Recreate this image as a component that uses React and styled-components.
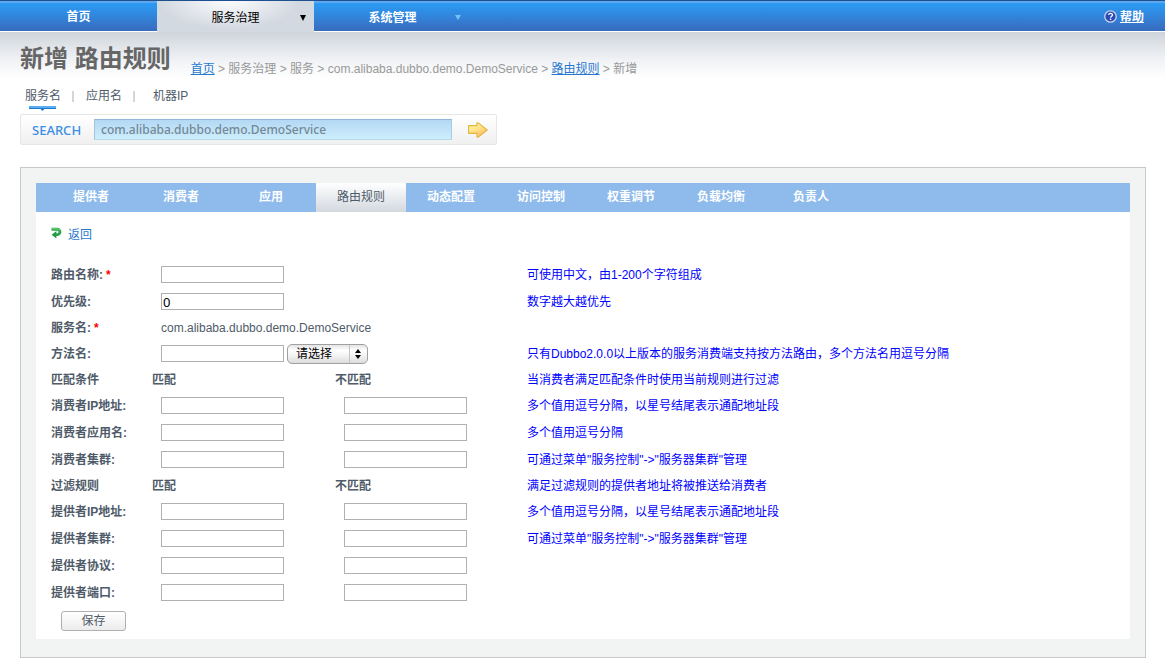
import React, { useState } from 'react';
import styled, { createGlobalStyle } from 'styled-components';

const GlobalStyle = createGlobalStyle`
  * {
    box-sizing: border-box;
  }
  body {
    margin: 0;
    background: #fff;
    color: #4f5b69;
    font-family: "Liberation Sans", "Noto Sans CJK SC", sans-serif;
    font-size: 12px;
    line-height: 16px;
  }
  a {
    color: #2878d0;
  }
`;

const Header = styled.header`
  display: flex;
  justify-content: space-between;
  height: 32px;
  border-top: 1px solid #1d4f91;
  border-bottom: 1px solid #fff;
  background: linear-gradient(#5fa9ee 0, #5ba6ee 2px, #2a9bf5 2px, #2f8ee6 10px, #386bbd 100%);
`;

const Nav = styled.nav`
  display: flex;
`;

const NavItem = styled.a`
  display: grid;
  grid-template-columns: 1fr auto 1fr;
  align-items: center;
  width: 157px;
  height: ${(props) => (props.$active ? '31px' : '30px')};
  padding-top: ${(props) => (props.$low ? '4px' : '2px')};
  color: ${(props) => (props.$active ? '#000' : '#fff')};
  background: ${(props) => (props.$active
    ? 'radial-gradient(ellipse 70px 28px at 46% 0, #fbfcfd, #d3d9e1)'
    : 'none')};
  font-weight: ${(props) => (props.$active ? 'normal' : 'bold')};
  text-decoration: none;
`;

const NavText = styled.span`
  grid-column: 2;
`;

const NavArrow = styled.svg`
  justify-self: end;
  margin-right: ${(props) => (props.$muted ? '10px' : '8px')};
`;

const Help = styled.a`
  display: flex;
  align-items: center;
  gap: 3px;
  margin-right: 21px;
  padding-top: 1px;
  color: #fff;
  font-weight: bold;
`;

const Page = styled.main`
  padding: 0 19px 13px 20px;
  background: linear-gradient(#cdd4da, #e0e4e9 14px, #f0f2f5 28px, #fff 46px);
`;

const TitleBar = styled.div`
  display: flex;
  align-items: flex-end;
  gap: 20px;
  height: 45px;
`;

const Title = styled.h1`
  margin: 0;
  color: #666;
  font-size: 24px;
  line-height: 36px;
`;

const Breadcrumb = styled.nav`
  color: #999;
`;

const TypeTabs = styled.div`
  display: flex;
  margin: 11px 5px 0;
  height: 26px;
`;

const TypeTab = styled.button`
  display: flex;
  flex-direction: column;
  align-items: center;
  padding: 0;
  border: 0;
  background: none;
  color: inherit;
  font: inherit;
`;

const Separator = styled.span`
  width: 2px;
  height: 11px;
  margin: 3px ${(props) => (props.$wide ? '18px' : '12px')} 0 11px;
  background: #d8d4d0;
`;

const SearchForm = styled.form`
  display: flex;
  align-items: center;
  width: 477px;
  height: 31px;
  padding: 0 8px 0 11px;
  border: 1px solid #e6e6e6;
  border-radius: 2px;
  background: linear-gradient(#fff, #f0f0f0);
`;

const SearchLabel = styled.label`
  width: 62px;
  color: #3a8ee6;
  font: 500 13px/20px "Noto Sans", sans-serif;
`;

const SearchInput = styled.input`
  flex: 1;
  height: 21px;
  padding: 0 6px;
  border: 1px solid;
  border-color: #93b7d8 #a3cde0 #b3d9ea #a3c5dc;
  background: linear-gradient(#b3d8f4, #cdeefc);
  color: #748896;
  font: 500 12px/18px "Noto Sans", sans-serif;
`;

const IconButton = styled.button`
  display: flex;
  margin-left: 16px;
  padding: 0;
  border: 0;
  background: none;
`;

const Panel = styled.section`
  margin-top: 22px;
  padding: 15px 15px 18px;
  border: 1px solid #c8c8c8;
  background: #f2f4f4;
`;

const Tabs = styled.nav`
  display: flex;
  height: 29px;
  padding-left: 10px;
  background: #8ebbeb;
`;

const Tab = styled.a`
  width: 90px;
  color: ${(props) => (props.$active ? '#4f5b69' : '#fff')};
  background: ${(props) => (props.$active ? 'linear-gradient(#fff, #d3d8df)' : 'none')};
  font-weight: ${(props) => (props.$active ? 'normal' : 'bold')};
  line-height: 28px;
  text-align: center;
  text-decoration: none;
`;

const Content = styled.div`
  padding: 15px 15px 8px;
  background: #fff;
`;

const Back = styled.a`
  display: flex;
  align-items: flex-start;
  gap: 6px;
  width: fit-content;
  margin-bottom: 18px;
  text-decoration: none;
`;

const FieldRow = styled.div`
  display: grid;
  grid-template-columns: 110px 183px 183px 1fr;
  align-items: center;
  height: ${(props) => (props.$text ? '25px' : '27px')};
`;

const SectionRow = styled.div`
  display: grid;
  grid-template-columns: 101px 183px 192px 1fr;
  align-items: center;
  height: 25px;
  font-weight: bold;
`;

const Label = styled.label`
  font-weight: bold;
`;

const Required = styled.span`
  margin-left: 3px;
  color: #f00;
`;

const Hint = styled.span`
  grid-column: 4;
  color: #00f;
  font-weight: normal;
`;

const Controls = styled.div`
  display: flex;
  align-items: center;
  gap: 3px;
`;

const TextInput = styled.input`
  width: 123px;
  height: 17px;
  padding: 0 1px;
  border: 1px solid #b0b0b0;
  background: #fff;
  color: #000;
  font: 13px/15px "Noto Sans", sans-serif;
`;

const SelectBox = styled.div`
  position: relative;
  flex: none;
  display: flex;
`;

const Select = styled.select`
  appearance: none;
  width: 81px;
  height: 20px;
  padding: 0 20px 0 8px;
  border: 1px solid #a0a0a0;
  border-radius: 5px;
  background: linear-gradient(#e4e4e4, #fff 30%, #f2f2f2 60%, #dcdcdc);
  color: #000;
  font: 12px/16px "Liberation Sans", "Noto Sans CJK SC", sans-serif;
`;

const SelectArrows = styled.svg`
  position: absolute;
  top: 1px;
  right: 1px;
  pointer-events: none;
`;

const SaveButton = styled.button`
  display: block;
  width: 65px;
  height: 20px;
  margin: 5px 10px 0;
  padding: 0;
  border: 1px solid #b0b0b0;
  border-radius: 3px;
  background: linear-gradient(#fff, #ececec);
  color: inherit;
  font: inherit;
`;

const tabs = ['提供者', '消费者', '应用', '路由规则', '动态配置', '访问控制', '权重调节', '负载均衡', '负责人'];

const matchFields = [
  { id: 'consumerHost', label: '消费者IP地址:', hint: '多个值用逗号分隔，以星号结尾表示通配地址段' },
  { id: 'consumerApp', label: '消费者应用名:', hint: '多个值用逗号分隔' },
  { id: 'consumerCluster', label: '消费者集群:', hint: '可通过菜单"服务控制"->"服务器集群"管理' },
];

const filterFields = [
  { id: 'providerHost', label: '提供者IP地址:', hint: '多个值用逗号分隔，以星号结尾表示通配地址段' },
  { id: 'providerCluster', label: '提供者集群:', hint: '可通过菜单"服务控制"->"服务器集群"管理' },
  { id: 'providerProtocol', label: '提供者协议:' },
  { id: 'providerPort', label: '提供者端口:' },
];

const HelpIcon = () => (
  <svg width="13" height="13" viewBox="0 0 13 13">
    <circle cx="6.5" cy="6.5" r="5.7" fill="#2a49b8" stroke="#c9d2e6" strokeWidth="1.3" />
    <path d="M4.6 5.1c0-2.4 3.9-2.4 3.9-.1 0 1.3-1.9 1.4-1.9 2.7" fill="none" stroke="#fff" strokeWidth="1.3" />
    <rect x="5.9" y="8.6" width="1.400" height="1.4" fill="#fff" />
  </svg>
);

const GoIcon = () => (
  <svg width="20" height="16" viewBox="0 0 20 16">
    <defs>
      <linearGradient id="go" x1="0" y1="0" x2="0.6" y2="1">
        <stop offset="0" stopColor="#fffbb8" />
        <stop offset="0.5" stopColor="#ffe488" />
        <stop offset="1" stopColor="#ffb868" />
      </linearGradient>
    </defs>
    <path d="M.6 3.6H9V.9l1.6.2 8.600 6.900-8.600 6.900-1.600.2v-3.700H.6z" fill="url(#go)" stroke="#dfb640" strokeWidth="1.1" strokeLinejoin="round" />
  </svg>
);

const BackIcon = () => (
  <svg width="11" height="12" viewBox="0 0 11 12">
    <path d="M.5 2.200h5.700a2.700 2.700 0 0 1 0 5.400H4.500" fill="none" stroke="#2aa548" strokeWidth="2.900" />
    <path d="M5.400 3.900v7.600L.6 7.700z" fill="#22994a" />
    <path d="M.8 1.800h5.400a3 3 0 0 1 2.800 2" fill="none" stroke="#74d884" strokeWidth="1" />
  </svg>
);

const MatchRow = ({ id, label, hint }) => (
  <FieldRow>
    <Label htmlFor={id}>{label}</Label>
    <TextInput id={id} type="text" />
    <TextInput type="text" aria-label={label + '不匹配'} />
    {hint && <Hint>{hint}</Hint>}
  </FieldRow>
);

const App = () => {
  const [search, setSearch] = useState('com.alibaba.dubbo.demo.DemoService');
  const [priority, setPriority] = useState('0');

  return (
    <>
      <GlobalStyle />
      <Header>
        <Nav>
          <NavItem href="#home"><NavText>首页</NavText></NavItem>
          <NavItem href="#governance" $active>
            <NavText>服务治理</NavText>
            <NavArrow width="6" height="6"><path d="M0 0h6L3 6z" fill="#000" /></NavArrow>
          </NavItem>
          <NavItem href="#system" $low>
            <NavText>系统管理</NavText>
            <NavArrow $muted width="6" height="7"><path d="M0 0h6L3 5z" fill="#7cc0fa" /></NavArrow>
          </NavItem>
        </Nav>
        <Help href="#help"><HelpIcon />帮助</Help>
      </Header>
      <Page>
        <TitleBar>
          <Title>新增 路由规则</Title>
          <Breadcrumb>
            <a href="#home">首页</a> &gt; 服务治理 &gt; 服务 &gt; com.alibaba.dubbo.demo.DemoService &gt; <a href="#routes">路由规则</a> &gt; 新增
          </Breadcrumb>
        </TitleBar>
        <TypeTabs>
          <TypeTab type="button">
            服务名
            <svg width="28" height="7">
              <path d="M0 2h27v2H0z" fill="#5aaef5" />
              <path d="M0 4h27v1H15.500l-2 2-2-2H0z" fill="#1f78c8" />
            </svg>
          </TypeTab>
          <Separator />
          <TypeTab type="button">应用名</TypeTab>
          <Separator $wide />
          <TypeTab type="button">机器IP</TypeTab>
        </TypeTabs>
        <SearchForm onSubmit={(e) => e.preventDefault()}>
          <SearchLabel htmlFor="search">SEARCH</SearchLabel>
          <SearchInput id="search" value={search} onChange={(e) => setSearch(e.target.value)} />
          <IconButton aria-label="search"><GoIcon /></IconButton>
        </SearchForm>

        <Panel>
          <Tabs>
            {tabs.map((tab) => (
              <Tab key={tab} href="#tab" $active={tab === '路由规则'}>{tab}</Tab>
            ))}
          </Tabs>
          <Content>
            <Back href="#back"><BackIcon />返回</Back>
            <form onSubmit={(e) => e.preventDefault()}>
              <FieldRow>
                <Label htmlFor="name">路由名称:<Required>*</Required></Label>
                <TextInput id="name" type="text" />
                <Hint>可使用中文，由1-200个字符组成</Hint>
              </FieldRow>
              <FieldRow>
                <Label htmlFor="priority">优先级:</Label>
                <TextInput id="priority" type="text" value={priority} onChange={(e) => setPriority(e.target.value)} />
                <Hint>数字越大越优先</Hint>
              </FieldRow>
              <FieldRow $text>
                <Label as="span">服务名:<Required>*</Required></Label>
                <span>com.alibaba.dubbo.demo.DemoService</span>
              </FieldRow>
              <FieldRow>
                <Label htmlFor="method">方法名:</Label>
                <Controls>
                  <TextInput id="method" type="text" />
                  <SelectBox>
                    <Select aria-label="方法名">
                      <option>请选择</option>
                    </Select>
                    <SelectArrows width="18" height="18">
                      <path d="M0 0h1v18H0z" fill="#c4c4c4" />
                      <path d="M6 8l3-4 3 4zM6 10l3 4 3-4z" fill="#000" />
                    </SelectArrows>
                  </SelectBox>
                </Controls>
                <Hint>只有Dubbo2.0.0以上版本的服务消费端支持按方法路由，多个方法名用逗号分隔</Hint>
              </FieldRow>
              <SectionRow>
                <span>匹配条件</span>
                <span>匹配</span>
                <span>不匹配</span>
                <Hint>当消费者满足匹配条件时使用当前规则进行过滤</Hint>
              </SectionRow>
              {matchFields.map((field) => <MatchRow key={field.id} {...field} />)}
              <SectionRow>
                <span>过滤规则</span>
                <span>匹配</span>
                <span>不匹配</span>
                <Hint>满足过滤规则的提供者地址将被推送给消费者</Hint>
              </SectionRow>
              {filterFields.map((field) => <MatchRow key={field.id} {...field} />)}
              <SaveButton type="submit">保存</SaveButton>
            </form>
          </Content>
        </Panel>
      </Page>
    </>
  );
};

export default App;
